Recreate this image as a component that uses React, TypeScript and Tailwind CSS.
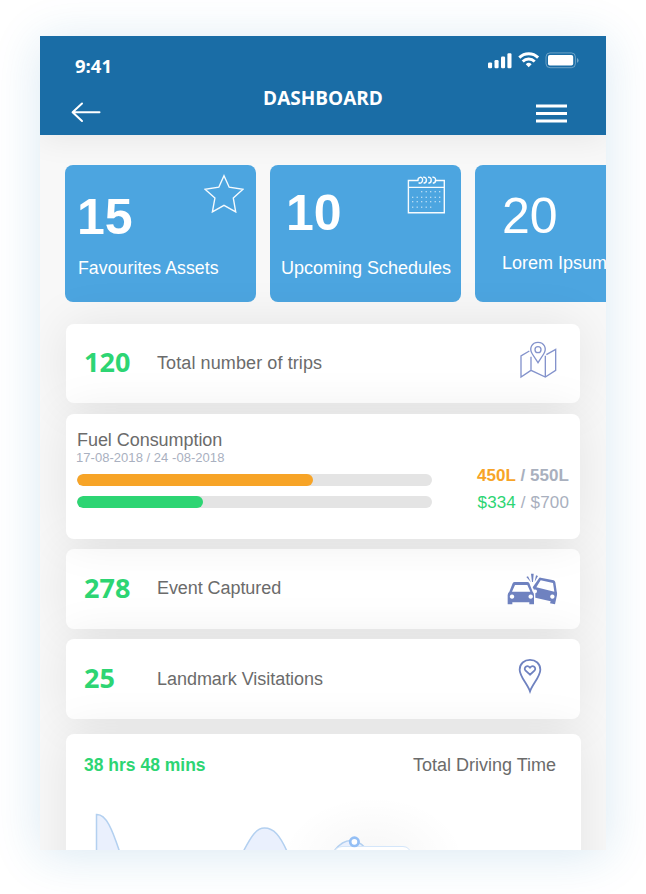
import React from "react";

const sans = "font-['Liberation_Sans',Arial,sans-serif]";
const open = "font-['Open_Sans',sans-serif]";
const softShadow = "shadow-[0_0_50px_rgba(0,0,0,0.085)]";

function StatusIcons() {
  return (
    <svg className="block h-[17px] w-[92px]" viewBox="488 52 92 17" fill="#fff">
      <rect x="488" y="62.4" width="4.1" height="5.8" rx="1.2" />
      <rect x="494.5" y="60" width="4.1" height="8.2" rx="1.2" />
      <rect x="501" y="56.6" width="4.1" height="11.6" rx="1.2" />
      <rect x="507.4" y="53.2" width="4.1" height="15" rx="1.2" />
      <g fill="none" stroke="#fff" strokeWidth="2.9">
        <path d="M519.300 57.600 a13.400 13.400 0 0 1 18.800 0" />
        <path d="M522.700 61.500 a8.600 8.600 0 0 1 12 0" />
      </g>
      <path d="M528.700 67.300 l-2.900 -3.100 a4.200 4.200 0 0 1 5.800 0 z" />
      <rect x="546" y="52.900" width="29.400" height="14.800" rx="4" fill="none" stroke="#fff" strokeOpacity=".35" />
      <rect x="548" y="55" width="25.200" height="10.500" rx="1.800" />
      <path d="M577 58 a2.600 2.600 0 0 1 0 4.800 z" fillOpacity=".4" />
    </svg>
  );
}

function Header() {
  return (
    <header className="relative z-10 flex h-[99px] shrink-0 justify-between bg-[#1a6da6] text-white shadow-[0_4px_30px_rgba(0,0,0,0.07)]">
      <div className="flex w-[180px] flex-col pl-[31px] pt-[18px]">
        <span className={`${open} pl-1 text-[18.5px] font-bold leading-6`}>9:41</span>
        <svg className="mt-[23px] block h-[22px] w-[30px]" viewBox="0 0 30 22" fill="none" stroke="#fff" strokeWidth="2" strokeLinecap="round" strokeLinejoin="round">
          <path d="M28.500 11.200 H1.800 M11 2.500 L1.600 11.200 L11 20" />
        </svg>
      </div>
      <h1 className={`${open} whitespace-nowrap pt-[50px] text-[19px] font-bold leading-6`}>DASHBOARD</h1>
      <div className="flex w-[180px] flex-col items-end pr-[26px] pt-4">
        <StatusIcons />
        <svg className="mr-[13px] mt-[35px] block h-[19px] w-[31px]" viewBox="0 0 31 19" fill="#fff">
          <rect y="0.500" width="31" height="3" />
          <rect y="8" width="31" height="3" />
          <rect y="15.500" width="31" height="3" />
        </svg>
      </div>
    </header>
  );
}

function Star() {
  return (
    <svg className="-mr-px mt-px block h-[39px] w-[40px]" viewBox="203.3 174 40 39" fill="none" stroke="#fff" strokeOpacity=".95" strokeWidth="1.4">
      <path d="M223.300 175.800 L228.500 187.200 L242.300 189.300 L232.600 198 L235 211.900 L223.300 205.300 L211.700 211.900 L214.200 198 L204.300 189.300 L218.100 187.200 Z" />
    </svg>
  );
}

const calendarRows = [
  { y: 191.7, from: 2, to: 7 },
  { y: 197.3, from: 0, to: 7 },
  { y: 201.7, from: 0, to: 7 },
  { y: 207.2, from: 0, to: 5 },
];
const calendarCols = [412.7, 417.2, 421.7, 426.2, 430.7, 435.2, 439.7];

function Calendar() {
  return (
    <svg className="block h-[39px] w-[39px]" viewBox="407 175 39 39" fill="none" stroke="#fff" strokeOpacity=".95" strokeWidth="1.4">
      <path d="M418.500 180.500 H408.400 V212.700 H444.300 V180.500 H435 M408.400 187.400 H444.300" />
      <path d="M418 180.500 c-.4 -3.800 4.400 -4.400 4.600 -.8 c.1 3.200 -2.800 4.200 -4 2.800 M423.200 177.300 c3.800 -.8 4.600 5.200 .4 6 M428 177.300 c3.800 -.8 4.600 5.200 .4 6 M432.400 177.300 c3.800 -.8 4.600 5.200 .4 6" />
      {calendarRows.map((r) =>
        calendarCols.slice(r.from, r.to).map((x) => (
          <rect key={`${r.y}-${x}`} x={x - 0.6} y={r.y - 0.6} width="1.2" height="1.2" fill="#fff" fillOpacity=".75" stroke="none" />
        )),
      )}
    </svg>
  );
}

function MapIcon() {
  return (
    <svg className="block h-[38px] w-[38px]" viewBox="242 92 114 114" fill="none" stroke="#8493cc" strokeWidth="4">
      <path d="M270 122 L245 137 V200 L275 180 L318 200 L349 180 V117 L321 133 M275 139 V180 M318 136 V200" />
      <path d="M296 157 L279 131 C268 114 278 96 296 96 C314 96 324 114 313 131 Z" />
      <circle cx="296" cy="118" r="9" />
    </svg>
  );
}

function CrashIcon() {
  return (
    <svg className="block h-[32px] w-[51px]" viewBox="200 99 153 96" fill="#6f82c0">
      <path
        fillRule="evenodd"
        d="M217 130 Q219 126 223 126 H261 Q265 126 267 130 L277 155 Q281 159 281 165 V193 H267 V187 H216 V193 H202 V165 Q203 158 207 155 Z M224 135 L215 155 H270 L261 135 Z M215 163.500 a6.500 6.500 0 1 0 .1 0 Z M271 163.500 a6.500 6.500 0 1 0 .1 0 Z"
      />
      <path
        fillRule="evenodd"
        d="M295 116 Q297 112 301 113 L340 121 Q344 122 345 127 L349 154 Q351 159 350 165 L344 193 L329 190 L331 184 L285 173 V160 Q291 158 290 152 Q288 148 281 149 L277 142 Z M301 121 L288 142 L342 155 L338 129 Z M336 163.500 a6.500 6.500 0 1 0 .1 0 Z"
      />
      <path d="M258 111 l5 -2 l9 18 z M272 101 h8 l-2 25 h-3 z M287 106 l6 2 l-10 17 z" />
    </svg>
  );
}

function HeartPin() {
  return (
    <svg className="block h-[36px] w-[24px]" viewBox="235 353 72 108" fill="none" stroke="#6f82c0" strokeWidth="5.4">
      <path d="M271 453 C263 431 240 408 240 388 C240 370 254 358.500 271 358.500 C288 358.500 302 370 302 388 C302 408 279 431 271 453 Z" />
      <path d="M271 403 L257 390 C251 382 262 372 271 382 C280 372 291 382 285 390 Z" />
    </svg>
  );
}

function StatRow({ value, label, icon, className, labelClass, iconClass }: { value: string; label: string; icon: React.ReactNode; className: string; labelClass: string; iconClass: string }) {
  return (
    <section className={`relative flex w-[514px] items-center rounded-lg bg-white ${softShadow} ${className}`}>
      <span className={`${open} mb-[3px] w-[92px] pl-[18px] text-[27px] font-bold leading-8 text-[#2dd573]`}>{value}</span>
      <span className={`-ml-px grow text-[18px] leading-6 text-[#6b6b6b] ${labelClass}`}>{label}</span>
      <span className={iconClass}>{icon}</span>
    </section>
  );
}

function Meter({ percent, color }: { percent: number; color: string }) {
  return (
    <div className="h-3 w-[355px] overflow-hidden rounded-full bg-[#e4e4e4]">
      <div className={`h-full rounded-full ${color}`} style={{ width: `${percent}%` }} />
    </div>
  );
}

function FuelCard() {
  return (
    <section className={`relative z-[3] mt-[11px] flex h-[125px] w-[514px] justify-between rounded-lg bg-white pl-[11px] pr-3 ${softShadow}`}>
      <div className="pt-3.5">
        <h2 className="text-[18px] leading-6 tracking-[-0.05px] text-[#6b6b6b]">Fuel Consumption</h2>
        <p className="-ml-px text-[13px] leading-3 tracking-[0.04px] text-[#a9b0c0]">17-08-2018 / 24 -08-2018</p>
        <div className="mt-2.5 flex flex-col gap-2.5">
          <Meter percent={66.6} color="bg-[#f7a427]" />
          <Meter percent={35.4} color="bg-[#2dd573]" />
        </div>
      </div>
      <div className="-mr-px pt-12 text-right text-[17px] leading-[27px] tracking-[0.06px] text-[#a9b0be]">
        <p className="font-bold"><span className="text-[#f7a427]">450L</span> / 550L</p>
        <p className="tracking-[0.15px]"><span className="text-[#2dd573]">$334</span> / $700</p>
      </div>
    </section>
  );
}

function DrivingCard() {
  return (
    <section className={`relative z-[3] mt-[15px] h-[200px] w-[515px] shrink-0 rounded-lg bg-white ${softShadow}`}>
      <div className="flex justify-between pl-[18px] pr-[25px] pt-[19px] leading-6">
        <span className="text-[17.5px] font-bold text-[#2dd573]">38 hrs 48 mins</span>
        <span className="text-[18px] text-[#6b6b6b]">Total Driving Time</span>
      </div>
      <svg className="mt-[7px] block h-[66px] w-[515px]" viewBox="66 784 515 66">
        <defs>
          <radialGradient id="tipShade">
            <stop offset="0" stopColor="#000" stopOpacity=".035" />
            <stop offset="1" stopColor="#000" stopOpacity="0" />
          </radialGradient>
        </defs>
        <ellipse cx="373" cy="860" rx="92" ry="64" fill="url(#tipShade)" />
        <g fill="#eaf0fd" stroke="#b3d0f0" strokeWidth="1.5">
          <path d="M96.500 856 V814.500 C106 814 112 828 121 856 Z" />
          <path d="M241 856 C252 834 257 828 264.500 828 C273 828 280 834 289 856 Z" />
          <path d="M331 856 C338 844 345 840 352 840.500 C359 841 364 845 371 856 Z" />
        </g>
        <rect x="334" y="846.500" width="77" height="30" rx="8" fill="#fff" stroke="#d4e6fa" />
        <circle cx="354.400" cy="841.800" r="4.200" fill="#fff" stroke="#94bff5" strokeWidth="2.700" />
      </svg>
    </section>
  );
}

export default function App() {
  return (
    <div className={`${sans} h-[894px] w-[646px] overflow-hidden bg-white pl-10 pt-9`}>
      <div className="h-[814px] w-[566px] shadow-[0_5px_45px_rgba(26,120,180,0.16)]">
        <div className="flex h-full w-full flex-col overflow-hidden bg-[#f8f8f8]">
          <Header />
          <main className="isolate flex flex-col">
            <div className="flex gap-3.5 pl-[25px] pt-[30px] text-white">
              <section className="h-[137px] w-[191px] shrink-0 rounded-lg bg-[#4ca5e0] px-[13px] pt-2">
                <div className="flex justify-between">
                  <span className="-ml-px pt-[19px] text-[50px] font-bold leading-[50px]">15</span>
                  <Star />
                </div>
                <p className="mt-4 whitespace-nowrap text-[17.7px] leading-5 tracking-[0.06px]">Favourites Assets</p>
              </section>
              <section className="h-[137px] w-[191px] shrink-0 rounded-lg bg-[#4ca5e0] pl-[11px] pr-[15px] pt-2.5">
                <div className="flex justify-between">
                  <span className="pl-[5px] pt-[13px] text-[50px] font-bold leading-[50px]">10</span>
                  <Calendar />
                </div>
                <p className="mt-5 whitespace-nowrap text-[18px] leading-5">Upcoming Schedules</p>
              </section>
              <section className="h-[137px] w-[191px] shrink-0 rounded-lg bg-[#4ca5e0] pl-[27px] pt-[26px]">
                <span className="block text-[50px] leading-[50px]">20</span>
                <p className="mt-3 whitespace-nowrap text-[18px] leading-5">Lorem Ipsum</p>
              </section>
            </div>
            <div className="flex flex-col pl-[26px] pt-[22px]">
              <StatRow value="120" label="Total number of trips" icon={<MapIcon />} className="z-[1] h-[79px]" labelClass="mb-0.5 tracking-[0.1px]" iconClass="mr-[22px] mb-[7px]" />
              <FuelCard />
              <StatRow value="278" label="Event Captured" icon={<CrashIcon />} className="z-[1] mt-2.5 h-[80px]" labelClass="mb-0.5 tracking-[-0.07px]" iconClass="mr-[22px]" />
              <StatRow value="25" label="Landmark Visitations" icon={<HeartPin />} className="z-[2] mt-2.5 h-[80px]" labelClass="mb-px tracking-[-0.04px]" iconClass="mr-[38px] mb-[7px]" />
              <DrivingCard />
            </div>
          </main>
        </div>
      </div>
    </div>
  );
}
